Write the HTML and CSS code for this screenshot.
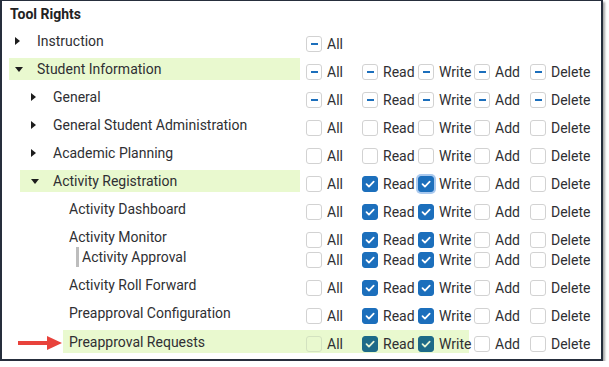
FILE: index.html
```html
<!DOCTYPE html>
<html lang="en">
<head>
    <meta charset="UTF-8">
    <title>Tool Rights</title>
    <link rel="stylesheet" href="styles.css">
</head>
<body>
    <div class="panel">
        <div class="title">Tool Rights</div>

        <div class="row">
            <div class="name"><span class="caret"><i class="tri-right"></i></span>Instruction</div>
            <div class="opt"><span class="cb part"></span>All</div>
        </div>

        <div class="row">
            <div class="name hl"><span class="caret"><i class="tri-down"></i></span>Student Information</div>
            <div class="opt"><span class="cb part"></span>All</div>
            <div class="opt"><span class="cb part"></span>Read</div>
            <div class="opt"><span class="cb part"></span>Write</div>
            <div class="opt"><span class="cb part"></span>Add</div>
            <div class="opt"><span class="cb part"></span>Delete</div>
        </div>

        <div class="row">
            <div class="name l1"><span class="caret"><i class="tri-right"></i></span>General</div>
            <div class="opt"><span class="cb part"></span>All</div>
            <div class="opt"><span class="cb part"></span>Read</div>
            <div class="opt"><span class="cb part"></span>Write</div>
            <div class="opt"><span class="cb part"></span>Add</div>
            <div class="opt"><span class="cb part"></span>Delete</div>
        </div>

        <div class="row">
            <div class="name l1"><span class="caret"><i class="tri-right"></i></span>General Student Administration</div>
            <div class="opt"><span class="cb"></span>All</div>
            <div class="opt"><span class="cb"></span>Read</div>
            <div class="opt"><span class="cb"></span>Write</div>
            <div class="opt"><span class="cb"></span>Add</div>
            <div class="opt"><span class="cb"></span>Delete</div>
        </div>

        <div class="row">
            <div class="name l1"><span class="caret"><i class="tri-right"></i></span>Academic Planning</div>
            <div class="opt"><span class="cb"></span>All</div>
            <div class="opt"><span class="cb"></span>Read</div>
            <div class="opt"><span class="cb"></span>Write</div>
            <div class="opt"><span class="cb"></span>Add</div>
            <div class="opt"><span class="cb"></span>Delete</div>
        </div>

        <div class="row">
            <div class="name l1 hl"><span class="caret"><i class="tri-down"></i></span>Activity Registration</div>
            <div class="opt"><span class="cb"></span>All</div>
            <div class="opt"><span class="cb on"><svg viewBox="0 0 16 16"><path d="M4 8.2l2.8 2.8L12.2 5.4"/></svg></span>Read</div>
            <div class="opt"><span class="cb on focus"><svg viewBox="0 0 16 16"><path d="M4 8.2l2.8 2.8L12.2 5.4"/></svg></span>Write</div>
            <div class="opt"><span class="cb"></span>Add</div>
            <div class="opt"><span class="cb"></span>Delete</div>
        </div>

        <div class="row">
            <div class="name l2">Activity Dashboard</div>
            <div class="opt"><span class="cb"></span>All</div>
            <div class="opt"><span class="cb on"><svg viewBox="0 0 16 16"><path d="M4 8.2l2.8 2.8L12.2 5.4"/></svg></span>Read</div>
            <div class="opt"><span class="cb on"><svg viewBox="0 0 16 16"><path d="M4 8.2l2.8 2.8L12.2 5.4"/></svg></span>Write</div>
            <div class="opt"><span class="cb"></span>Add</div>
            <div class="opt"><span class="cb"></span>Delete</div>
        </div>

        <div class="row short">
            <div class="name l2">Activity Monitor</div>
            <div class="opt"><span class="cb"></span>All</div>
            <div class="opt"><span class="cb on"><svg viewBox="0 0 16 16"><path d="M4 8.2l2.8 2.8L12.2 5.4"/></svg></span>Read</div>
            <div class="opt"><span class="cb on"><svg viewBox="0 0 16 16"><path d="M4 8.2l2.8 2.8L12.2 5.4"/></svg></span>Write</div>
            <div class="opt"><span class="cb"></span>Add</div>
            <div class="opt"><span class="cb"></span>Delete</div>
        </div>

        <div class="row">
            <div class="name l2 sub"><span class="bar"></span>Activity Approval</div>
            <div class="opt"><span class="cb"></span>All</div>
            <div class="opt"><span class="cb on"><svg viewBox="0 0 16 16"><path d="M4 8.2l2.8 2.8L12.2 5.4"/></svg></span>Read</div>
            <div class="opt"><span class="cb on"><svg viewBox="0 0 16 16"><path d="M4 8.2l2.8 2.8L12.2 5.4"/></svg></span>Write</div>
            <div class="opt"><span class="cb"></span>Add</div>
            <div class="opt"><span class="cb"></span>Delete</div>
        </div>

        <div class="row">
            <div class="name l2">Activity Roll Forward</div>
            <div class="opt"><span class="cb"></span>All</div>
            <div class="opt"><span class="cb on"><svg viewBox="0 0 16 16"><path d="M4 8.2l2.8 2.8L12.2 5.4"/></svg></span>Read</div>
            <div class="opt"><span class="cb on"><svg viewBox="0 0 16 16"><path d="M4 8.2l2.8 2.8L12.2 5.4"/></svg></span>Write</div>
            <div class="opt"><span class="cb"></span>Add</div>
            <div class="opt"><span class="cb"></span>Delete</div>
        </div>

        <div class="row">
            <div class="name l2">Preapproval Configuration</div>
            <div class="opt"><span class="cb"></span>All</div>
            <div class="opt"><span class="cb on"><svg viewBox="0 0 16 16"><path d="M4 8.2l2.8 2.8L12.2 5.4"/></svg></span>Read</div>
            <div class="opt"><span class="cb on"><svg viewBox="0 0 16 16"><path d="M4 8.2l2.8 2.8L12.2 5.4"/></svg></span>Write</div>
            <div class="opt"><span class="cb"></span>Add</div>
            <div class="opt"><span class="cb"></span>Delete</div>
        </div>

        <div class="row">
            <svg class="arrow" viewBox="0 0 44 16">
                <rect x="0" y="6" width="31" height="4" fill="#e8423b"/>
                <polygon points="29,1 44,8 29,15" fill="#e8423b"/>
            </svg>
            <div class="hl-group">
                <div class="name l2 flush">Preapproval Requests</div>
                <div class="opt"><span class="cb"></span>All</div>
                <div class="opt"><span class="cb on"><svg viewBox="0 0 16 16"><path d="M4 8.2l2.8 2.8L12.2 5.4"/></svg></span>Read</div>
                <div class="opt"><span class="cb on"><svg viewBox="0 0 16 16"><path d="M4 8.2l2.8 2.8L12.2 5.4"/></svg></span>Write</div>
            </div>
            <div class="opt"><span class="cb"></span>Add</div>
            <div class="opt"><span class="cb"></span>Delete</div>
        </div>
    </div>
</body>
</html>
```

FILE: styles.css
```css
body {
    margin: 0;
    background-color: #fff;
    font-family: Roboto, 'Liberation Sans', sans-serif;
    font-size: 14px;
    color: #2f2f33;
}

.panel {
    width: 603px;
    height: 361px;
    box-sizing: border-box;
    border-style: solid;
    border-color: #262e3c;
    border-width: 1px 2px 2px 2px;
    box-shadow: 2px 2px 2px rgba(0, 0, 0, 0.35);
    background-color: #fff;
}

.title {
    height: 28px;
    line-height: 26px;
    padding-left: 8px;
    font-weight: bold;
    color: #222;
}

.row {
    display: flex;
    align-items: flex-start;
    height: 28px;
    padding-left: 7px;
}

.row.short {
    height: 20px;
}

.name {
    display: flex;
    align-items: center;
    box-sizing: border-box;
    width: 291px;
    height: 22px;
    margin-top: 1px;
    margin-right: 1px;
    padding-left: 6px;
    white-space: nowrap;
}

.name.l1 {
    width: 280px;
    margin-left: 11px;
    padding-left: 11px;
}

.name.l2 {
    width: 237px;
    margin-left: 54px;
    padding-left: 6px;
}

.name.sub {
    padding-left: 13px;
}

.name.flush {
    height: 23px;
    margin-left: 0;
    margin-top: 0;
}

.hl {
    background-color: #e9f9cf;
}

.caret {
    display: inline-flex;
    align-items: center;
    width: 22px;
    height: 22px;
}

.tri-right {
    width: 0;
    height: 0;
    border-left: 5px solid #1d1d1d;
    border-top: 4px solid transparent;
    border-bottom: 4px solid transparent;
}

.tri-down {
    width: 0;
    height: 0;
    border-top: 5px solid #1d1d1d;
    border-left: 4px solid transparent;
    border-right: 4px solid transparent;
}

.bar {
    width: 3px;
    height: 20px;
    margin-right: 3px;
    background-color: #bdbdbd;
}

.opt {
    display: flex;
    align-items: center;
    width: 51px;
    height: 16px;
    margin-top: 7px;
    margin-left: 5px;
    white-space: nowrap;
}

.cb {
    flex: none;
    display: flex;
    align-items: center;
    justify-content: center;
    box-sizing: border-box;
    width: 16px;
    height: 16px;
    margin-right: 5px;
    border: 1px solid #d2d2d2;
    border-radius: 3px;
    background-color: #fff;
}

.cb.part::after {
    content: "";
    width: 7px;
    height: 2px;
    background-color: #1c6fbc;
}

.cb.on {
    border-color: #1c6fbc;
    background-color: #1c6fbc;
}

.cb svg {
    width: 16px;
    height: 16px;
}

.cb svg path {
    fill: none;
    stroke: #fff;
    stroke-width: 2;
    stroke-linecap: round;
    stroke-linejoin: round;
}

.cb.focus {
    box-shadow: 0 0 0 2px #aac9ee;
}

.arrow {
    flex: none;
    width: 44px;
    height: 16px;
    margin-top: 6px;
    margin-left: 9px;
    margin-right: 1px;
}

.hl-group {
    display: flex;
    align-items: flex-start;
    height: 23px;
    margin-top: 1px;
    background-color: #e9f9cf;
}

.hl-group .opt {
    margin-top: 6px;
}

.hl-group .cb {
    border-color: #d3e2c0;
    background-color: transparent;
}

.hl-group .cb.on {
    border-color: #1d6a88;
    background-color: #1d6a88;
}

.hl-group .cb svg path {
    stroke: #e6f4d6;
}
```
